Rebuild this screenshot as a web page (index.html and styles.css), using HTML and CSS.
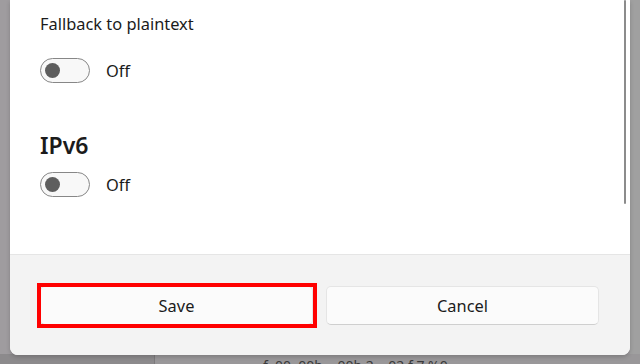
FILE: index.html
```html
<!DOCTYPE html>
<html>
<head>
<meta charset="utf-8">
<link rel="stylesheet" href="styles.css">
</head>
<body>
<div class="screen">
  <div class="dialog">
    <div class="content">
      <div class="label">Fallback to plaintext</div>
      <div class="toggle-row first">
        <span class="toggle"><span class="thumb"></span></span>
        <span class="state">Off</span>
      </div>
      <h2 class="heading">IPv6</h2>
      <div class="toggle-row second">
        <span class="toggle"><span class="thumb"></span></span>
        <span class="state">Off</span>
      </div>
      <div class="scrollbar"></div>
    </div>
    <div class="footer">
      <button class="btn btn-save">Save</button>
      <button class="btn">Cancel</button>
    </div>
  </div>
  <div class="underlay">
    <div class="under-left"></div>
    <div class="under-right"><span class="under-text">f. 00, 00b&nbsp;&nbsp;&nbsp;&nbsp;00b 2&nbsp;&nbsp;&nbsp;&nbsp;02 f 7 %0</span></div>
  </div>
</div>
</body>
</html>
```
FILE: styles.css
```css
html, body {
  margin: 0;
  padding: 0;
}
body {
  width: 640px;
  height: 364px;
  overflow: hidden;
  background: #9f9c9f;
  font-family: "Noto Sans", "Open Sans", sans-serif;
  color: #1b1b1b;
}
.screen {
  display: flex;
  flex-direction: column;
  height: 364px;
  background: linear-gradient(to right, #9f9c9f 0, #9f9c9f 630px, #a0a0a0 630px);
}
.dialog {
  margin-left: 10px;
  width: 620px;
  height: 355px;
  border-radius: 0 0 8px 8px;
  overflow: hidden;
  background: #ffffff;
  display: flex;
  flex-direction: column;
  box-shadow: 0 2px 4px rgba(0,0,0,0.18);
  position: relative;
  z-index: 1;
}
.content {
  position: relative;
  height: 254px;
  box-sizing: border-box;
  padding: 12px 30px 0 30px;
  background: #ffffff;
}
.label {
  font-size: 16.4px;
  line-height: 24px;
}
.toggle-row {
  display: flex;
  align-items: center;
  height: 25px;
}
.toggle-row.first { margin-top: 22px; }
.toggle-row.second { margin-top: 11px; }
.toggle {
  width: 48px;
  height: 23px;
  border: 1px solid #878787;
  border-radius: 13px;
  background: #f8f8f8;
  display: flex;
  align-items: center;
}
.thumb {
  width: 15px;
  height: 15px;
  margin-left: 4px;
  border-radius: 50%;
  background: #5e5e5e;
}
.state {
  margin-left: 16px;
  font-size: 16.4px;
  line-height: 24px;
}
.heading {
  margin: 46px 0 0 0;
  font-size: 23px;
  line-height: 32px;
  font-weight: 600;
}
.scrollbar {
  position: absolute;
  right: 4px;
  top: 0;
  width: 2px;
  height: 204px;
  border-radius: 1px;
  background: #8c8c8c;
}
.footer {
  flex: 1;
  background: #f3f3f3;
  border-top: 1px solid #e5e5e5;
  display: grid;
  grid-template-columns: 1fr 1fr;
  column-gap: 13px;
  align-content: start;
  padding: 31px 31px 0 30px;
}
.btn {
  height: 39px;
  border: 1px solid #e5e5e5;
  border-bottom-color: #cfcfcf;
  border-radius: 5px;
  background: #fbfbfb;
  font-family: "Noto Sans", "Open Sans", sans-serif;
  font-size: 16.4px;
  color: #1b1b1b;
  padding: 0;
}
.btn-save {
  position: relative;
}
.btn-save::after {
  content: "";
  position: absolute;
  left: -4px;
  right: -5px;
  top: -4px;
  bottom: -4px;
  border: 4px solid #ff0000;
}
.underlay {
  flex: 1;
  display: flex;
  overflow: hidden;
  margin-top: -1px;
}
.under-left {
  width: 154px;
  background: #8c8a8c;
  border-right: 1px solid #7c7a7c;
}
.under-right {
  flex: 1;
  background: #999799;
  padding-left: 108px;
  overflow: hidden;
}
.under-text {
  display: block;
  font-size: 14px;
  line-height: 14px;
  margin-top: 5px;
  color: #3a3a3a;
  white-space: pre;
}
```
